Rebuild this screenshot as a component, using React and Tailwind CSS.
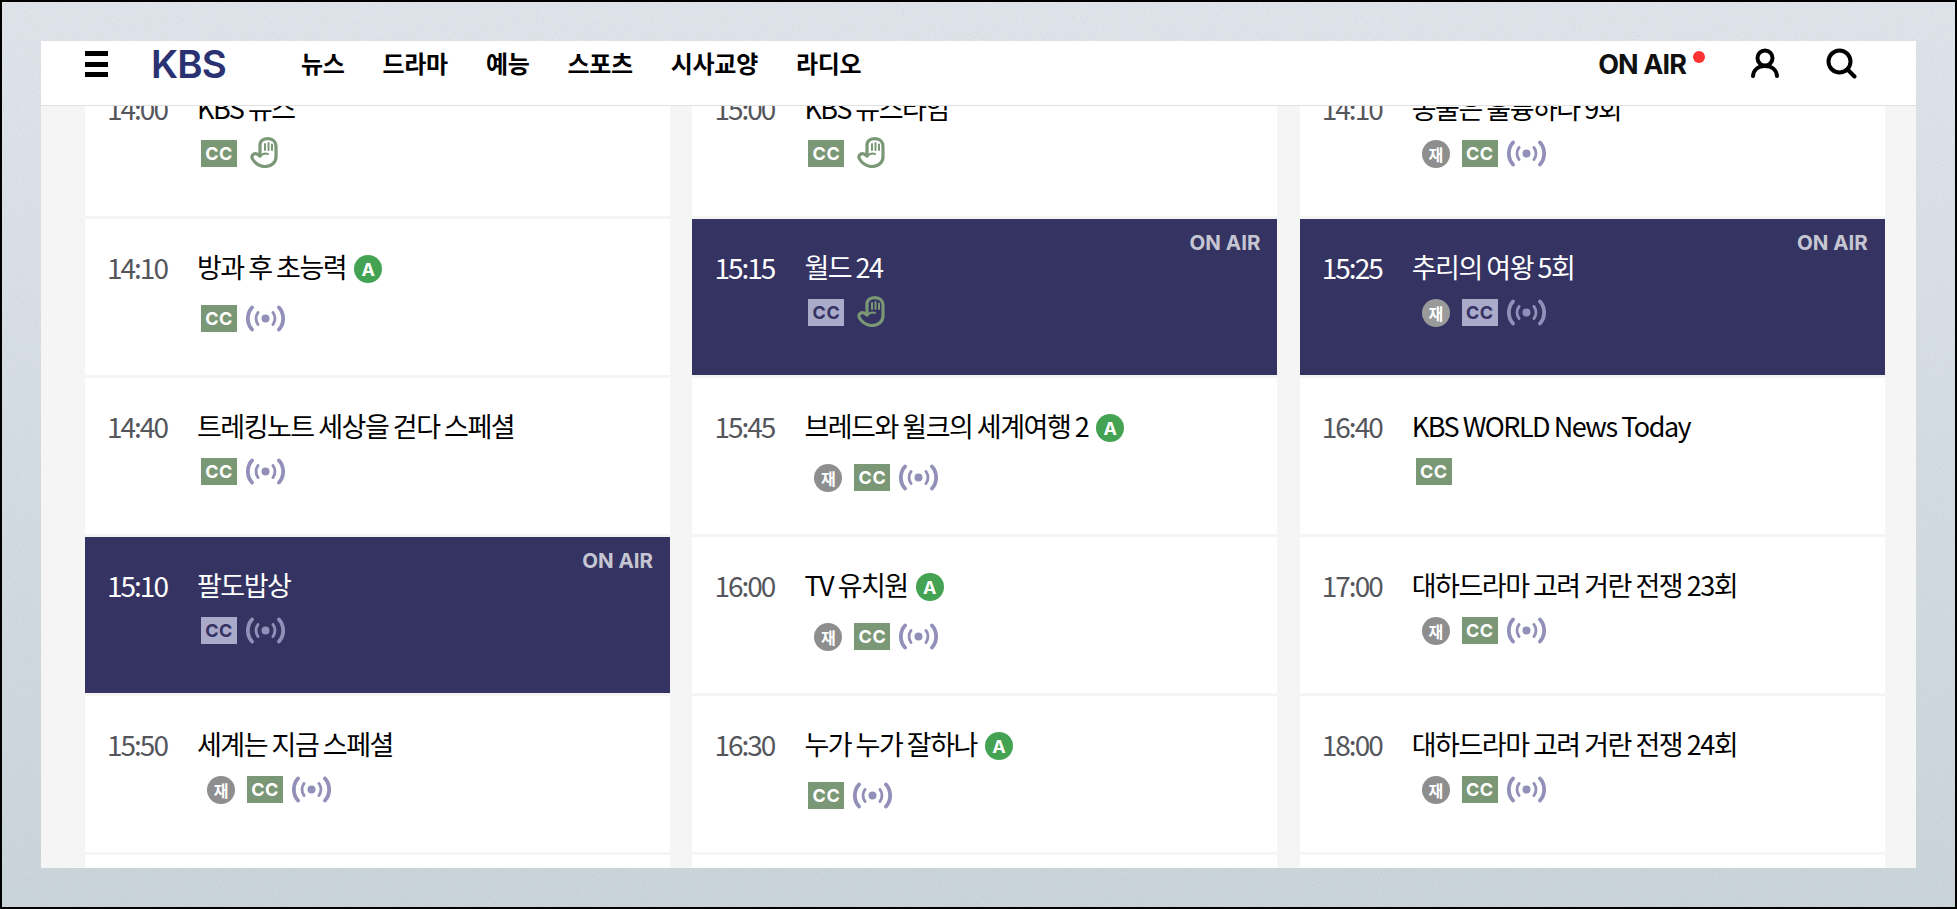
const font = { fontFamily: '"Noto Sans CJK KR", "Noto Sans", sans-serif' };

const columns = [
  [
    { time: '14:00', title: 'KBS 뉴스', cc: true, hand: true },
    { time: '14:10', title: '방과 후 초능력', all: true, cc: true, live: true },
    { time: '14:40', title: '트레킹노트 세상을 걷다 스페셜', cc: true, live: true },
    { time: '15:10', title: '팔도밥상', cc: true, live: true, onAir: true },
    { time: '15:50', title: '세계는 지금 스페셜', re: true, cc: true, live: true },
    {},
  ],
  [
    { time: '15:00', title: 'KBS 뉴스타임', cc: true, hand: true },
    { time: '15:15', title: '월드 24', cc: true, hand: true, onAir: true },
    { time: '15:45', title: '브레드와 윌크의 세계여행 2', all: true, re: true, cc: true, live: true },
    { time: '16:00', title: 'TV 유치원', all: true, re: true, cc: true, live: true },
    { time: '16:30', title: '누가 누가 잘하나', all: true, cc: true, live: true },
    {},
  ],
  [
    { time: '14:10', title: '동물은 훌륭하다 9회', re: true, cc: true, live: true },
    { time: '15:25', title: '추리의 여왕 5회', re: true, cc: true, live: true, onAir: true },
    { time: '16:40', title: 'KBS WORLD News Today', cc: true },
    { time: '17:00', title: '대하드라마 고려 거란 전쟁 23회', re: true, cc: true, live: true },
    { time: '18:00', title: '대하드라마 고려 거란 전쟁 24회', re: true, cc: true, live: true },
    {},
  ],
];

const nav = ['뉴스', '드라마', '예능', '스포츠', '시사교양', '라디오'];

function Hand({ onAir }) {
  return (
    <svg width="28" height="31" viewBox="0 0 28 31" fill={onAir ? 'none' : '#fff'} stroke="#7a9776" strokeWidth="3.200" strokeLinecap="round" strokeLinejoin="round" className="ml-[13px] -mt-[3px]">
      <path d="M15 29.500C9.500 29.500 5 26 2.500 22C0.800 19 3.500 15.500 7 17L10 19L10 8C10 3.500 14 1.600 18 1.600C23 1.600 26 5 26 9.500L26 20C26 25.500 21.500 29.500 15 29.500Z" />
      <path d="M15 7V13M18.500 6V13M22 7.500V13" strokeWidth="2" />
      <path d="M10 19.500C12 17 15 16 18 17" strokeWidth="2" />
    </svg>
  );
}

function Live() {
  return (
    <svg width="39" height="27" viewBox="0 0 39 27" fill="none" stroke="#9290b8" strokeWidth="3.800" strokeLinecap="round" className="ml-[9px]">
      <circle cx="19.500" cy="13.500" r="4" fill="#9290b8" stroke="none" />
      <path d="M6 2.500C0.500 8.500 0.500 18.500 6 24.500M33 2.500C38.500 8.500 38.500 18.500 33 24.500" />
      <path d="M12 7.500C9.500 11 9.500 16 12 19.500M27 7.500C29.500 11 29.500 16 27 19.500" strokeWidth="3" />
    </svg>
  );
}

function Row({ item }) {
  const { time, title, all, re, cc, hand, live, onAir } = item;
  return (
    <div className={`relative h-[156px] shrink-0 flex pl-[22px] pt-[31px] ${onAir ? 'bg-[#343362]' : 'bg-white'}`}>
      {onAir && (
        <span className="absolute right-[17px] top-[11px] text-[20.500px] leading-[26px] font-bold text-[#c6c6d2] font-['Inter']">ON AIR</span>
      )}
      <span className={`w-[90px] shrink-0 text-[28px] leading-[34px] tracking-[-2px] ${onAir ? 'text-white' : 'text-[#55565c]'}`}>{time}</span>
      <div className="flex flex-col items-start">
        <div className="flex items-center h-[34px]">
          <span className={`text-[27px] leading-[34px] tracking-[-1.500px] ${onAir ? 'text-white' : 'text-black'}`}>{title}</span>
          {all && (
            <span className="ml-[8px] mt-[4px] w-[28px] h-[28px] rounded-full bg-[#43a353] text-white text-[18px] font-bold flex items-center justify-center font-['Inter']">A</span>
          )}
        </div>
        {cc && (
          <div className={`flex items-center h-[27px] pl-[4px] ${all ? 'mt-[21px]' : 'mt-[15px]'}`}>
            {re && (
              <span className={`mr-[12px] ml-[6px] w-[28px] h-[28px] rounded-full text-white text-[16px] font-bold flex items-center justify-center ${onAir ? 'bg-[#9a9a9a]' : 'bg-[#8e8e8e]'}`}>재</span>
            )}
            <span className={`w-[36px] h-[27px] flex items-center justify-center text-[18px] tracking-[0.5px] font-bold font-['Inter'] ${onAir ? 'bg-[#aaaacb] text-[#343362]' : 'bg-[#7a9776] text-white'}`}>CC</span>
            {hand && <Hand onAir={onAir} />}
            {live && <Live />}
          </div>
        )}
      </div>
    </div>
  );
}

export default function App() {
  return (
    <div className="relative w-[1957px] h-[909px] overflow-hidden border-2 border-black bg-gradient-to-b from-[#e1e7ee] to-[#cad6dc] p-[39px]" style={font}>
      {/* wallpaper grain */}
      <svg className="absolute inset-0 w-full h-full opacity-[0.2]">
        <filter id="grain">
          <feTurbulence type="fractalNoise" baseFrequency="0.7" numOctaves="2" />
          <feColorMatrix type="saturate" values="0" />
        </filter>
        <rect width="100%" height="100%" filter="url(#grain)" />
      </svg>

      <div className="relative flex flex-col h-full bg-[#f5f5f5] overflow-hidden">
        <header className="relative z-10 shrink-0 h-[65px] bg-white border-b border-[#e0e0e0] flex items-start">
          <div className="ml-[44px] mt-[10px] w-[23px] h-[26px] flex flex-col justify-between">
            <span className="h-[5px] bg-black" />
            <span className="h-[5px] bg-black" />
            <span className="h-[5px] bg-black" />
          </div>
          <span className="ml-[43px] mt-[1px] w-[77px] text-[38.500px] leading-[44px] font-semibold tracking-[-0.8px] text-[#2a3272] font-['Inter']">KBS</span>
          <nav className="ml-[73px] mt-[4px] flex gap-[38px] text-[24px] leading-[36px] font-semibold tracking-[-0.300px] text-black">
            {nav.map((n) => (
              <span key={n}>{n}</span>
            ))}
          </nav>
          <div className="ml-auto flex items-start">
            <span className="mt-[6px] text-[27px] leading-[36px] font-bold tracking-[-0.9px] text-[#111] font-['Inter']">ON AIR</span>
            <span className="ml-[7px] mt-[10px] w-[12px] h-[12px] rounded-full bg-[#ff3333]" />
            <svg width="28" height="30" viewBox="0 0 28 30" fill="none" stroke="#000" strokeWidth="4" strokeLinecap="round" className="ml-[46px] mt-[7px]">
              <circle cx="14" cy="10" r="7.500" />
              <path d="M2 28C2.500 22.500 6.500 18 14 18C21.500 18 25.500 22.500 26 28" />
            </svg>
            <svg width="31" height="31" viewBox="0 0 31 31" fill="none" stroke="#000" strokeWidth="4" strokeLinecap="round" className="ml-[47px] mr-[59px] mt-[7px]">
              <circle cx="13.500" cy="13.500" r="11" />
              <path d="M21.500 21.500L28.500 28.500" />
            </svg>
          </div>
        </header>

        <main className="flex-1 min-h-0 overflow-hidden pl-[44px]">
          <div className="flex gap-[22.400px] -mt-[46px]">
            {columns.map((col, i) => (
              <div key={i} className="w-[585px] flex flex-col gap-[3px]">
                {col.map((item, j) => (
                  <Row key={j} item={item} />
                ))}
              </div>
            ))}
          </div>
        </main>
      </div>
    </div>
  );
}
